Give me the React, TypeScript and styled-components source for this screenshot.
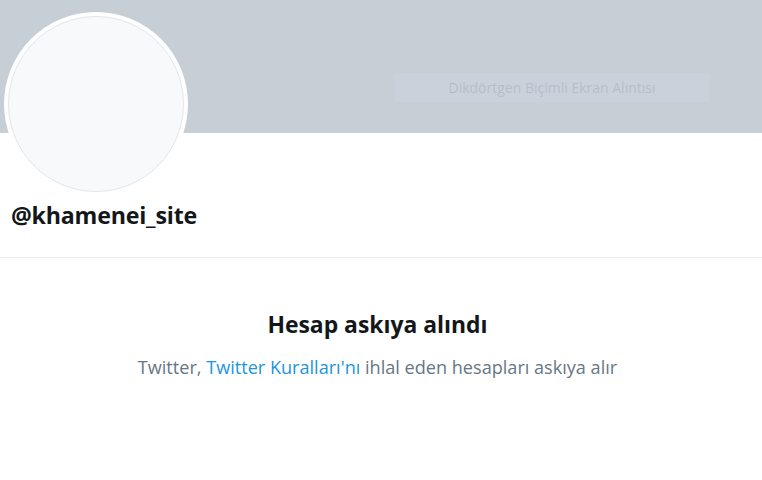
import React from "react";
import styled, { createGlobalStyle } from "styled-components";

const Global = createGlobalStyle`
  html, body { margin: 0; padding: 0; background: #ffffff; }
  body { font-family: "Open Sans", "Noto Sans", sans-serif; }
`;

const Page = styled.div`
  width: 762px;
  height: 480px;
  overflow: hidden;
  background: #ffffff;
  display: flex;
  flex-direction: column;
`;

const Banner = styled.div`
  position: relative;
  height: 133px;
  background: #c6ced6;
  flex-shrink: 0;
`;

const Watermark = styled.div`
  position: absolute;
  left: 395px;
  top: 73px;
  width: 314px;
  height: 29px;
  background: rgba(202, 211, 221, 0.7);
  display: flex;
  align-items: center;
  justify-content: center;
  color: rgba(178, 188, 199, 0.9);
  font-size: 14px;
`;

const Profile = styled.div`
  position: relative;
  z-index: 1;
  display: flex;
  flex-direction: column;
  align-items: flex-start;
  padding: 0 0 0 4px;
  height: 124px;
  border-bottom: 1px solid #e6ecf0;
`;

const Avatar = styled.div`
  width: 184px;
  height: 184px;
  margin-top: -121px;
  border-radius: 50%;
  background: #ffffff;
  padding: 4px;
  box-sizing: border-box;
  flex-shrink: 0;
`;

const AvatarInner = styled.div`
  width: 100%;
  height: 100%;
  border-radius: 50%;
  background: #f7f9fa;
  border: 1px solid #e3e7eb;
  box-sizing: border-box;
`;

const Handle = styled.div`
  margin: 3px 0 0 7px;
  font-size: 23.2px;
  font-weight: 700;
  color: #14171a;
  letter-spacing: -0.2px;
`;

const Message = styled.div`
  display: flex;
  flex-direction: column;
  align-items: center;
  padding: 51px 7px 0 0;
`;

const Title = styled.div`
  font-size: 22.9px;
  font-weight: 700;
  color: #14171a;
`;

const Sub = styled.div`
  margin-top: 15px;
  font-size: 18.1px;
  color: #657786;
`;

const Link = styled.a`
  color: #1b95e0;
  text-decoration: none;
`;

export default function App() {
  return (
    <Page>
      <Global />
      <Banner>
        <Watermark>Dikdörtgen Biçimli Ekran Alıntısı</Watermark>
      </Banner>
      <Profile>
        <Avatar>
          <AvatarInner />
        </Avatar>
        <Handle>@khamenei_site</Handle>
      </Profile>
      <Message>
        <Title>Hesap askıya alındı</Title>
        <Sub>
          Twitter, <Link href="#">Twitter Kuralları'nı</Link> ihlal eden hesapları askıya alır
        </Sub>
      </Message>
    </Page>
  );
}
